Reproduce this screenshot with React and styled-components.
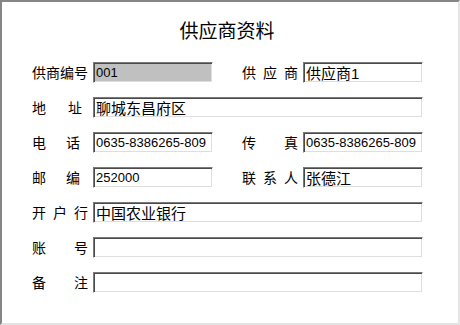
import React from 'react';
import styled, { createGlobalStyle } from 'styled-components';

const GlobalStyle = createGlobalStyle`
  html, body {
    margin: 0;
    padding: 0;
    background: #ffffff;
  }
  body {
    font-family: "Noto Sans CJK SC", "Liberation Sans", sans-serif;
  }
`;

// Sunken panel that fills the whole window
const Frame = styled.div`
  width: 460px;
  height: 325px;
  box-sizing: border-box;
  background: #ffffff;
  border-top: 2px solid #858585;
  border-left: 2px solid #858585;
  border-right: 2px solid #e3e3e3;
  border-bottom: 2px solid #e3e3e3;
  padding: 16px 0 0 30px;
`;

const Title = styled.h1`
  margin: 0 0 20px -30px;
  padding-right: 6px;
  height: 24px;
  line-height: 24px;
  text-align: center;
  font-size: 19px;
  font-weight: 400;
  color: #000000;
`;

const Form = styled.div`
  display: flex;
  flex-direction: column;
  gap: 14px;
`;

const Row = styled.div`
  display: flex;
  align-items: center;
  height: 21px;
`;

// Label box is always 61px wide; the glyphs are spread across $span pixels
const Label = styled.div`
  display: flex;
  flex-shrink: 0;
  width: 61px;
  margin-left: ${({ $indent }) => ($indent ? '29px' : '0')};
  font-size: 14px;
  line-height: 21px;
  color: #000000;
`;

const LabelText = styled.div`
  display: flex;
  justify-content: space-between;
  width: ${({ $span }) => $span}px;
`;

const Field = styled.input`
  box-sizing: border-box;
  width: ${({ $wide }) => ($wide ? '330px' : '120px')};
  height: 21px;
  margin: 0;
  padding: 0 2px;
  border-style: solid;
  border-width: 1px;
  border-color: #7a7a7a #ffffff #ffffff #7a7a7a;
  box-shadow: inset 1px 1px 0 #4a4a4a, inset -1px -1px 0 #dedede;
  border-radius: 0;
  background: ${({ $disabled }) => ($disabled ? '#c0c0c0' : '#ffffff')};
  color: #000000;
  font-family: "Liberation Sans", "Noto Sans CJK SC", sans-serif;
  font-size: ${({ $cjk }) => ($cjk ? '15px' : '13px')};
  outline: none;
`;

function FieldLabel({ text, span = 56, indent }) {
  return (
    <Label $indent={indent}>
      <LabelText $span={span}>
        {text.split('').map((ch, i) => (
          <span key={i}>{ch}</span>
        ))}
      </LabelText>
    </Label>
  );
}

export default function App() {
  return (
    <>
      <GlobalStyle />
      <Frame>
        <Title>供应商资料</Title>
        <Form>
          <Row>
            <FieldLabel text="供商编号" />
            <Field readOnly $disabled value="001" />
            <FieldLabel text="供应商" indent />
            <Field readOnly $cjk value="供应商1" />
          </Row>
          <Row>
            <FieldLabel text="地址" span={50} />
            <Field readOnly $wide $cjk value="聊城东昌府区" />
          </Row>
          <Row>
            <FieldLabel text="电话" span={48} />
            <Field readOnly value="0635-8386265-809" />
            <FieldLabel text="传真" indent />
            <Field readOnly value="0635-8386265-809" />
          </Row>
          <Row>
            <FieldLabel text="邮编" span={48} />
            <Field readOnly value="252000" />
            <FieldLabel text="联系人" indent />
            <Field readOnly $cjk value="张德江" />
          </Row>
          <Row>
            <FieldLabel text="开户行" />
            <Field readOnly $wide $cjk value="中国农业银行" />
          </Row>
          <Row>
            <FieldLabel text="账号" />
            <Field readOnly $wide value="" />
          </Row>
          <Row>
            <FieldLabel text="备注" />
            <Field readOnly $wide value="" />
          </Row>
        </Form>
      </Frame>
    </>
  );
}
